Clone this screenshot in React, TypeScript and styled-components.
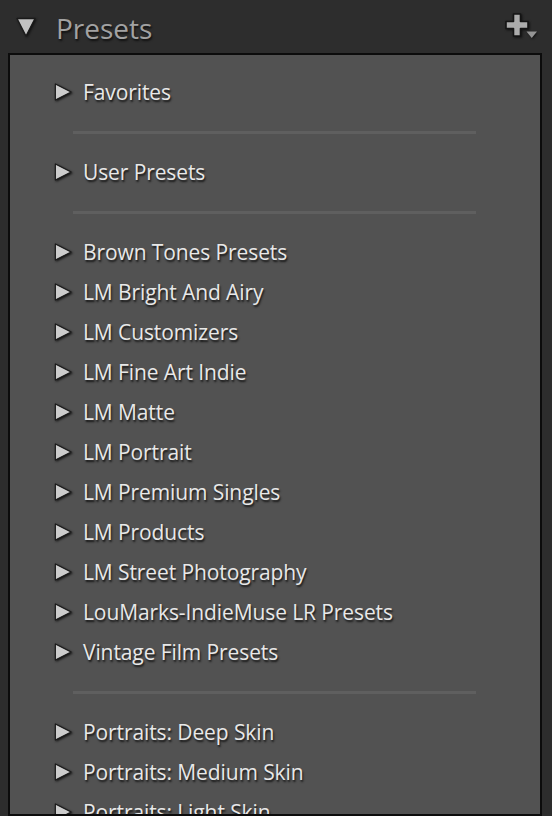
import React from "react";
import styled, { createGlobalStyle } from "styled-components";

const GlobalStyle = createGlobalStyle`
  html, body {
    margin: 0;
    padding: 0;
    background: #2d2d2d;
  }
  body {
    width: 552px;
    height: 816px;
    overflow: hidden;
    font-family: "Open Sans", "Noto Sans", sans-serif;
  }
`;

const groups: string[][] = [
  ["Favorites"],
  ["User Presets"],
  [
    "Brown Tones Presets",
    "LM Bright And Airy",
    "LM Customizers",
    "LM Fine Art Indie",
    "LM Matte",
    "LM Portrait",
    "LM Premium Singles",
    "LM Products",
    "LM Street Photography",
    "LouMarks-IndieMuse LR Presets",
    "Vintage Film Presets",
  ],
  ["Portraits: Deep Skin", "Portraits: Medium Skin", "Portraits: Light Skin"],
];

// Styled Components

const Page = styled.div`
  width: 552px;
  height: 816px;
  background: #2d2d2d;
  display: flex;
  flex-direction: column;
  overflow: hidden;
`;

const Header = styled.div`
  height: 53px;
  display: flex;
  align-items: center;
  padding: 0 14px 0 16px;
  box-sizing: border-box;
`;

const HeaderTitle = styled.h2`
  margin: 0 0 0 20px;
  flex: 1;
  font-size: 28px;
  font-weight: 400;
  color: #a2a2a2;
  text-shadow: 1px 2px 2px #111;
  line-height: 1;
  padding-top: 2px;
`;

const Icon = styled.svg`
  flex-shrink: 0;
  display: block;
  overflow: visible;
  filter: drop-shadow(1px 1px 1px #121212);
`;

const Panel = styled.div`
  margin: 0 10px 0 8px;
  flex: 1;
  background: #525252;
  border: 2px solid #0c0c0c;
  padding-top: 17px;
  overflow: hidden;
`;

const Row = styled.div`
  height: 40px;
  display: flex;
  align-items: center;
  padding-left: 44px;
`;

const RowLabel = styled.span`
  margin-left: 11px;
  font-size: 21px;
  color: #e8e8e8;
  text-shadow: 1px 2px 2px #151515;
  white-space: nowrap;
  letter-spacing: -0.1px;
`;

const Divider = styled.div`
  height: 40px;
  display: flex;
  align-items: center;
  padding: 0 64px 0 63px;

  &::after {
    content: "";
    flex: 1;
    height: 3px;
    background: #5f5f5f;
  }
`;

// Icons

const Disclosure = ({ down, size }: { down?: boolean; size: number }) => (
  <Icon width={size} height={size} viewBox="0 0 20 20">
    <polygon
      points={down ? "1,1.5 19,1.5 10,19" : "1.5,1 19,10 1.5,19"}
      fill={down ? "#c2c2c2" : "#cdcdcd"}
      stroke="#1a1a1a"
      strokeWidth="1.3"
      strokeLinejoin="round"
    />
  </Icon>
);

const AddIcon = () => (
  <Icon width="34" height="30" viewBox="0 0 34 30">
    <path
      d="M9.5 2 h7 v7.5 h7.5 v7 h-7.5 v7.5 h-7 v-7.5 h-7.5 v-7 h7.5 z"
      fill="#ababab"
      stroke="#141414"
      strokeWidth="1.6"
      strokeLinejoin="round"
    />
    <polygon points="22.5,19.5 33,19.5 27.75,26" fill="#949494" />
  </Icon>
);

export default function App() {
  return (
    <Page>
      <GlobalStyle />
      <Header>
        <Disclosure down size={20} />
        <HeaderTitle>Presets</HeaderTitle>
        <AddIcon />
      </Header>
      <Panel>
        {groups.map((items, gi) => (
          <React.Fragment key={gi}>
            {gi > 0 && <Divider />}
            {items.map((name) => (
              <Row key={name}>
                <Disclosure size={18} />
                <RowLabel>{name}</RowLabel>
              </Row>
            ))}
          </React.Fragment>
        ))}
      </Panel>
    </Page>
  );
}
